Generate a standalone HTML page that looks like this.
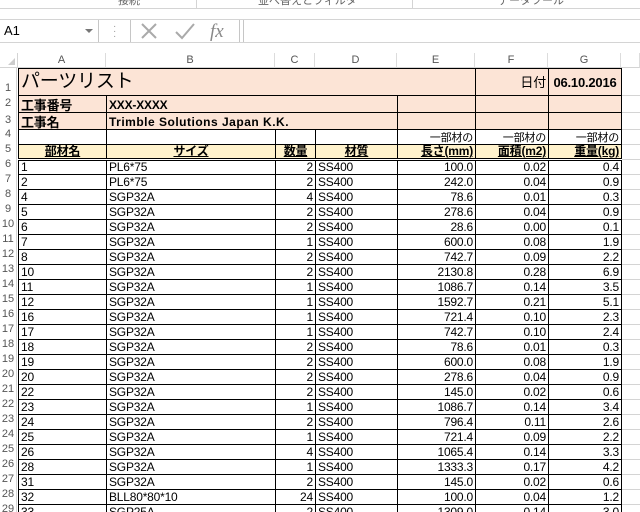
<!DOCTYPE html>
<html style="overflow:hidden;width:640px;height:512px"><head><meta charset="utf-8"><style>
*{margin:0;padding:0;box-sizing:border-box}
body{width:640px;height:512px;overflow:hidden;background:#fff;font-family:"Liberation Sans","Noto Sans CJK JP",sans-serif;position:relative}
.abs{position:absolute}
table{position:absolute;left:18px;top:68px;width:633px;border-collapse:collapse;table-layout:fixed;font-size:12px}
td{border:1px solid #000;height:15px;padding:0 2px;white-space:nowrap;overflow:hidden;line-height:13px;vertical-align:bottom;letter-spacing:-0.2px}
td.r{text-align:right}
td.h{border:none;border-left:1px solid #d4d4d4;border-bottom:1px solid #d4d4d4}
.pk{background:#fce4d6}
.yl{background:#fff2cc;font-weight:bold;text-align:center;text-decoration:underline}
tr.r5 td{border-bottom:3px double #000}
.rn{position:absolute;left:0;width:17px;font-size:11px;color:#555;text-align:center;border-right:1px solid #d4d4d4}
.ch{position:absolute;top:53px;height:15px;font-size:11px;color:#555;text-align:center;line-height:15px;border-right:1px solid #dcdcdc;border-bottom:1px solid #d4d4d4}
</style></head><body>
<div class="abs" style="left:0;top:0;width:640px;height:9px;border-bottom:1px solid #d4d4d4;font-size:11px;color:#666;overflow:hidden;line-height:4px">
<span class="abs" style="left:118px;top:-4px;line-height:10px">接続</span>
<span class="abs" style="left:196px;top:0;height:9px;border-left:1px solid #d4d4d4"></span>
<span class="abs" style="left:258px;top:-4px;line-height:10px">並べ替えとフィルタ</span>
<span class="abs" style="left:412px;top:0;height:9px;border-left:1px solid #d4d4d4"></span>
<span class="abs" style="left:498px;top:-4px;line-height:10px">データツール</span>
</div>
<div class="abs" style="left:0;top:19px;width:640px;height:24px;border-top:1px solid #d4d4d4;border-bottom:1px solid #d4d4d4"></div>
<div class="abs" style="left:0;top:20px;width:99px;height:22px;background:#fff;border-right:1px solid #c6c6c6;font-size:13px;line-height:22px;padding-left:4px">A1<span class="abs" style="left:85px;top:9px;border:4px solid transparent;border-top:4px solid #777"></span></div>
<div class="abs" style="left:113px;top:24px;color:#999;font-size:10px;line-height:5px">·<br>·<br>·</div>
<div class="abs" style="left:130px;top:20px;width:110px;height:22px;border-left:1px solid #c6c6c6;border-right:1px solid #c6c6c6;background:#fff"></div>
<svg class="abs" style="left:138px;top:21px" width="100" height="20"><path d="M4 3L18 17M18 3L4 17" stroke="#aaa" stroke-width="2"/><path d="M38 11L44 17L56 3" stroke="#aaa" stroke-width="2" fill="none"/><text x="72" y="16" font-family="Liberation Serif" font-style="italic" font-size="19" fill="#888">fx</text></svg>
<div class="abs" style="left:243px;top:20px;width:397px;height:22px;border-left:1px solid #c6c6c6"></div>
<div class="abs" style="left:0;top:53px;width:18px;height:15px;border-right:1px solid #d4d4d4;border-bottom:1px solid #d4d4d4"><span class="abs" style="left:8px;top:5px;border-left:7px solid transparent;border-bottom:7px solid #ccc"></span></div>
<div class="ch" style="left:18px;width:88px">A</div>
<div class="ch" style="left:106px;width:169px">B</div>
<div class="ch" style="left:275px;width:40px">C</div>
<div class="ch" style="left:315px;width:82px">D</div>
<div class="ch" style="left:397px;width:78px">E</div>
<div class="ch" style="left:475px;width:73px">F</div>
<div class="ch" style="left:548px;width:73px">G</div>
<div class="ch" style="left:621px;width:19px"></div>
<div class="rn" style="top:68px;height:444px"></div>
<div class="rn" style="top:82px">1</div><div class="rn" style="top:97px">2</div><div class="rn" style="top:114px">3</div><div class="rn" style="top:128px">4</div>
<div class="rn" style="top:143px">5</div>
<div class="rn" style="top:158px">6</div><div class="rn" style="top:173px">7</div><div class="rn" style="top:188px">8</div><div class="rn" style="top:203px">9</div><div class="rn" style="top:218px">10</div><div class="rn" style="top:233px">11</div><div class="rn" style="top:248px">12</div><div class="rn" style="top:263px">13</div><div class="rn" style="top:278px">14</div><div class="rn" style="top:293px">15</div><div class="rn" style="top:308px">16</div><div class="rn" style="top:323px">17</div><div class="rn" style="top:338px">18</div><div class="rn" style="top:353px">19</div><div class="rn" style="top:368px">20</div><div class="rn" style="top:383px">21</div><div class="rn" style="top:398px">22</div><div class="rn" style="top:413px">23</div><div class="rn" style="top:428px">24</div><div class="rn" style="top:443px">25</div><div class="rn" style="top:458px">26</div><div class="rn" style="top:473px">27</div><div class="rn" style="top:488px">28</div><div class="rn" style="top:503px">29</div>
<table>
<colgroup><col style="width:88px"><col style="width:169px"><col style="width:40px"><col style="width:82px"><col style="width:78px"><col style="width:73px"><col style="width:73px"><col style="width:30px"></colgroup>
<tr style="height:27px"><td colspan="5" class="pk" style="font-size:19px;line-height:24px;vertical-align:middle">パーツリスト</td><td class="pk r" style="font-size:13px;vertical-align:middle">日付</td><td class="pk" style="font-weight:bold;text-align:center;font-size:13px;vertical-align:middle">06.10.2016</td><td class="h"></td></tr>
<tr style="height:17px"><td class="pk" style="font-weight:bold;font-size:13px">工事番号</td><td colspan="3" class="pk" style="font-weight:bold">XXX-XXXX</td><td class="pk"></td><td class="pk"></td><td class="pk"></td><td class="h"></td></tr>
<tr style="height:17px"><td class="pk" style="font-weight:bold;font-size:13px">工事名</td><td colspan="3" class="pk" style="font-weight:bold;letter-spacing:0.5px">Trimble Solutions Japan K.K.</td><td class="pk"></td><td class="pk"></td><td class="pk"></td><td class="h"></td></tr>
<tr style="height:13px"><td></td><td></td><td></td><td></td><td class="r" style="font-size:11px;line-height:11px">一部材の</td><td class="r" style="font-size:11px;line-height:11px">一部材の</td><td class="r" style="font-size:11px;line-height:11px">一部材の</td><td class="h"></td></tr>
<tr class="r5" style="height:15px"><td class="yl">部材名</td><td class="yl">サイズ</td><td class="yl">数量</td><td class="yl">材質</td><td class="yl" style="text-align:right">長さ(mm)</td><td class="yl" style="text-align:right">面積(m2)</td><td class="yl" style="text-align:right">重量(kg)</td><td class="h" style="border-bottom:1px solid #d4d4d4"></td></tr>
<tr><td>1</td><td>PL6*75</td><td class="r">2</td><td>SS400</td><td class="r">100.0</td><td class="r">0.02</td><td class="r">0.4</td><td class="h"></td></tr>
<tr><td>2</td><td>PL6*75</td><td class="r">2</td><td>SS400</td><td class="r">242.0</td><td class="r">0.04</td><td class="r">0.9</td><td class="h"></td></tr>
<tr><td>4</td><td>SGP32A</td><td class="r">4</td><td>SS400</td><td class="r">78.6</td><td class="r">0.01</td><td class="r">0.3</td><td class="h"></td></tr>
<tr><td>5</td><td>SGP32A</td><td class="r">2</td><td>SS400</td><td class="r">278.6</td><td class="r">0.04</td><td class="r">0.9</td><td class="h"></td></tr>
<tr><td>6</td><td>SGP32A</td><td class="r">2</td><td>SS400</td><td class="r">28.6</td><td class="r">0.00</td><td class="r">0.1</td><td class="h"></td></tr>
<tr><td>7</td><td>SGP32A</td><td class="r">1</td><td>SS400</td><td class="r">600.0</td><td class="r">0.08</td><td class="r">1.9</td><td class="h"></td></tr>
<tr><td>8</td><td>SGP32A</td><td class="r">2</td><td>SS400</td><td class="r">742.7</td><td class="r">0.09</td><td class="r">2.2</td><td class="h"></td></tr>
<tr><td>10</td><td>SGP32A</td><td class="r">2</td><td>SS400</td><td class="r">2130.8</td><td class="r">0.28</td><td class="r">6.9</td><td class="h"></td></tr>
<tr><td>11</td><td>SGP32A</td><td class="r">1</td><td>SS400</td><td class="r">1086.7</td><td class="r">0.14</td><td class="r">3.5</td><td class="h"></td></tr>
<tr><td>12</td><td>SGP32A</td><td class="r">1</td><td>SS400</td><td class="r">1592.7</td><td class="r">0.21</td><td class="r">5.1</td><td class="h"></td></tr>
<tr><td>16</td><td>SGP32A</td><td class="r">1</td><td>SS400</td><td class="r">721.4</td><td class="r">0.10</td><td class="r">2.3</td><td class="h"></td></tr>
<tr><td>17</td><td>SGP32A</td><td class="r">1</td><td>SS400</td><td class="r">742.7</td><td class="r">0.10</td><td class="r">2.4</td><td class="h"></td></tr>
<tr><td>18</td><td>SGP32A</td><td class="r">2</td><td>SS400</td><td class="r">78.6</td><td class="r">0.01</td><td class="r">0.3</td><td class="h"></td></tr>
<tr><td>19</td><td>SGP32A</td><td class="r">2</td><td>SS400</td><td class="r">600.0</td><td class="r">0.08</td><td class="r">1.9</td><td class="h"></td></tr>
<tr><td>20</td><td>SGP32A</td><td class="r">2</td><td>SS400</td><td class="r">278.6</td><td class="r">0.04</td><td class="r">0.9</td><td class="h"></td></tr>
<tr><td>22</td><td>SGP32A</td><td class="r">2</td><td>SS400</td><td class="r">145.0</td><td class="r">0.02</td><td class="r">0.6</td><td class="h"></td></tr>
<tr><td>23</td><td>SGP32A</td><td class="r">1</td><td>SS400</td><td class="r">1086.7</td><td class="r">0.14</td><td class="r">3.4</td><td class="h"></td></tr>
<tr><td>24</td><td>SGP32A</td><td class="r">2</td><td>SS400</td><td class="r">796.4</td><td class="r">0.11</td><td class="r">2.6</td><td class="h"></td></tr>
<tr><td>25</td><td>SGP32A</td><td class="r">1</td><td>SS400</td><td class="r">721.4</td><td class="r">0.09</td><td class="r">2.2</td><td class="h"></td></tr>
<tr><td>26</td><td>SGP32A</td><td class="r">4</td><td>SS400</td><td class="r">1065.4</td><td class="r">0.14</td><td class="r">3.3</td><td class="h"></td></tr>
<tr><td>28</td><td>SGP32A</td><td class="r">1</td><td>SS400</td><td class="r">1333.3</td><td class="r">0.17</td><td class="r">4.2</td><td class="h"></td></tr>
<tr><td>31</td><td>SGP32A</td><td class="r">2</td><td>SS400</td><td class="r">145.0</td><td class="r">0.02</td><td class="r">0.6</td><td class="h"></td></tr>
<tr><td>32</td><td>BLL80*80*10</td><td class="r">24</td><td>SS400</td><td class="r">100.0</td><td class="r">0.04</td><td class="r">1.2</td><td class="h"></td></tr>
<tr><td>33</td><td>SGP25A</td><td class="r">2</td><td>SS400</td><td class="r">1309.0</td><td class="r">0.14</td><td class="r">3.0</td><td class="h"></td></tr>
</table>
</body></html>
